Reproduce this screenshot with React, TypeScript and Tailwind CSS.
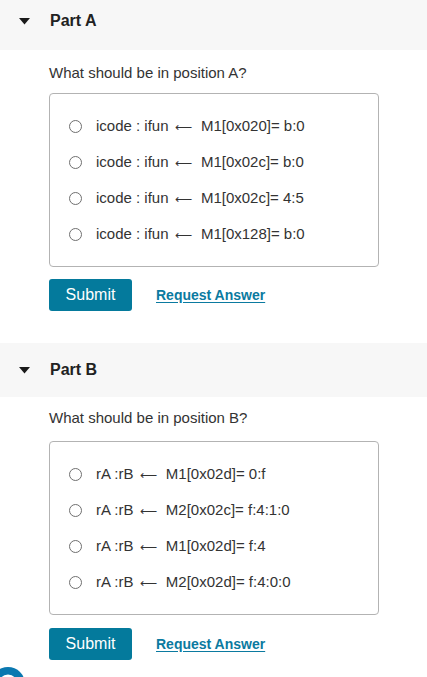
import React from "react";

interface PartData {
  label: string;
  question: string;
  options: [string, string][];
}

// each option is split around the arrow so the arrow can use a font that has a long one
const parts: PartData[] = [
  {
    label: "Part A",
    question: "What should be in position A?",
    options: [
      ["icode : ifun", "M1[0x020]= b:0"],
      ["icode : ifun", "M1[0x02c]= b:0"],
      ["icode : ifun", "M1[0x02c]= 4:5"],
      ["icode : ifun", "M1[0x128]= b:0"],
    ],
  },
  {
    label: "Part B",
    question: "What should be in position B?",
    options: [
      ["rA :rB", "M1[0x02d]= 0:f"],
      ["rA :rB", "M2[0x02c]= f:4:1:0"],
      ["rA :rB", "M1[0x02d]= f:4"],
      ["rA :rB", "M2[0x02d]= f:4:0:0"],
    ],
  },
];

const Caret = () => (
  <svg width="11" height="7" viewBox="0 0 11 7" className="shrink-0">
    <path d="M0 0 L11 0 L5.5 6.5 Z" fill="#1a1a1a" />
  </svg>
);

const OptionRow: React.FC<{ left: string; right: string }> = ({ left, right }) => (
  <label className="flex h-9 items-center">
    <span className="ml-[19px] mr-[14px] h-[13px] w-[13px] shrink-0 rounded-full border border-[#6f6f6f] bg-white" />
    <span className="text-[15px] text-[#333333]">
      {left}{" "}
      <span className="ml-[2px] mr-[5px] font-['DejaVu_Sans',sans-serif] text-[12px] font-light">
        {"\u27F5"}
      </span>{" "}
      {right}
    </span>
  </label>
);

const PartSection: React.FC<{ part: PartData; first: boolean }> = ({ part, first }) => (
  <section className={first ? "" : "mt-[32px]"}>
    <div
      className={`flex items-center bg-[#f7f7f7] pl-[19px] ${
        first ? "h-[50px] pb-[8px]" : "h-[54px]"
      }`}
    >
      <Caret />
      <h2 className="ml-[20px] text-[16px] font-bold text-[#222222]">{part.label}</h2>
    </div>

    <div className="pl-[49px] pr-[48px]">
      <p className={`text-[15px] leading-5 text-[#333333] ${first ? "mt-[13px]" : "mt-[11px]"}`}>
        {part.question}
      </p>

      <div
        className={`rounded-[4px] border border-[#b3b3b3] py-[14px] ${
          first ? "mt-[10px]" : "mt-[13px]"
        }`}
      >
        {part.options.map(([l, r]) => (
          <OptionRow key={l + r} left={l} right={r} />
        ))}
      </div>

      <div className={`flex items-center ${first ? "mt-[12px]" : "mt-[13px]"}`}>
        <button className="h-8 w-[83px] rounded-[3px] bg-[#047a9c] text-[16px] text-white">
          Submit
        </button>
        <a className="ml-[24px] text-[14px] font-bold text-[#0b7aa0] underline underline-offset-2">
          Request Answer
        </a>
      </div>
    </div>
  </section>
);

export default function App() {
  return (
    <div className="min-h-screen bg-white font-['Liberation_Sans',Arial,sans-serif]">
      {parts.map((p, i) => (
        <PartSection key={p.label} part={p} first={i === 0} />
      ))}

      <div className="-ml-[10px] mt-[6px] flex items-center gap-[6px]">
        <svg width="36" height="36" viewBox="0 0 36 36">
          <circle cx="18" cy="18" r="17" fill="#0a78b0" />
          <path d="M10 18 A8 8 0 0 1 26 18" stroke="#ffffff" strokeWidth="3" fill="none" />
          <path d="M14 18 A4 4 0 0 1 22 18" stroke="#ffffff" strokeWidth="2.5" fill="none" />
        </svg>
        <span className="text-[22px] text-[#555555]">Pearson</span>
      </div>
    </div>
  );
}
